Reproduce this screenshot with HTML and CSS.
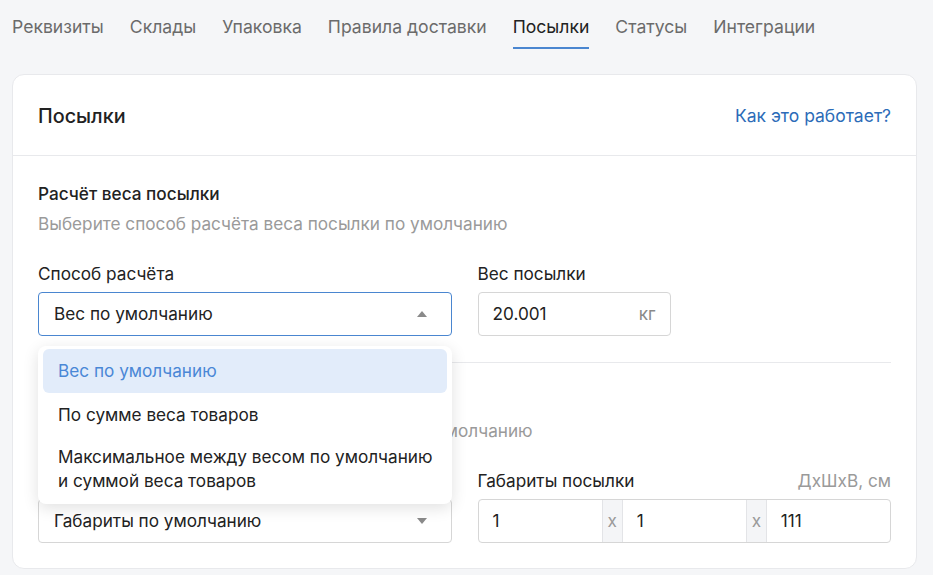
FILE: index.html
```html
<!DOCTYPE html>
<html lang="ru">
<head>
    <meta charset="UTF-8">
    <meta name="viewport" content="width=device-width, initial-scale=1.0">
    <title>Посылки</title>
    <link rel="stylesheet" href="styles.css">
</head>
<body>
    <nav class="tabs">
        <a class="tab">Реквизиты</a>
        <a class="tab">Склады</a>
        <a class="tab">Упаковка</a>
        <a class="tab">Правила доставки</a>
        <a class="tab active">Посылки</a>
        <a class="tab">Статусы</a>
        <a class="tab">Интеграции</a>
    </nav>

    <div class="card">
        <div class="card-header">
            <h2>Посылки</h2>
            <a class="help-link">Как это работает?</a>
        </div>

        <div class="card-body">
            <section class="section">
                <h3 class="section-title">Расчёт веса посылки</h3>
                <p class="section-desc">Выберите способ расчёта веса посылки по умолчанию</p>

                <div class="fields">
                    <div class="field">
                        <div class="field-label">Способ расчёта</div>
                        <div class="select-wrap">
                            <div class="select open">
                                <span>Вес по умолчанию</span>
                                <span class="caret up"></span>
                            </div>
                            <ul class="dropdown">
                                <li class="option selected">Вес по умолчанию</li>
                                <li class="option">По сумме веса товаров</li>
                                <li class="option multiline">Максимальное между весом по умолчанию<br>и суммой веса товаров</li>
                            </ul>
                        </div>
                    </div>
                    <div class="field">
                        <div class="field-label">Вес посылки</div>
                        <div class="input weight">
                            <span>20.001</span>
                            <span class="unit">кг</span>
                        </div>
                    </div>
                </div>
            </section>

            <hr class="divider">

            <section class="section">
                <h3 class="section-title">Расчёт габаритов посылки</h3>
                <p class="section-desc">Выберите способ расчёта объёма посылки по умолчанию</p>

                <div class="fields">
                    <div class="field">
                        <div class="field-label">Способ расчёта</div>
                        <div class="select">
                            <span>Габариты по умолчанию</span>
                            <span class="caret"></span>
                        </div>
                    </div>
                    <div class="field">
                        <div class="field-label">
                            <span>Габариты посылки</span>
                            <span class="hint">ДхШхВ, см</span>
                        </div>
                        <div class="input-group">
                            <span class="cell">1</span>
                            <span class="addon">x</span>
                            <span class="cell">1</span>
                            <span class="addon">x</span>
                            <span class="cell">111</span>
                        </div>
                    </div>
                </div>
            </section>
        </div>
    </div>
</body>
</html>
```

FILE: styles.css
```css
* {
    margin: 0;
    padding: 0;
    box-sizing: border-box;
}

body {
    font-family: Inter, 'Noto Sans', sans-serif;
    font-size: 17.2px;
    line-height: 20px;
    background: #f5f6f8;
    color: #222;
}

.tabs {
    display: flex;
    gap: 26px;
    padding: 0 12px;
}

.tab {
    padding: 17px 0 10px;
    font-size: 17.6px;
    color: #6b6b6b;
    border-bottom: 2px solid transparent;
    cursor: pointer;
}

.tab.active {
    color: #222;
    border-bottom-color: #4a86d0;
}

.card {
    width: 905px;
    margin: 25px 0 0 12px;
    background: #fff;
    border: 1px solid #e8e9ec;
    border-radius: 12px;
}

.card-header {
    display: flex;
    justify-content: space-between;
    align-items: center;
    height: 81px;
    padding: 2px 25px 0;
    border-bottom: 1px solid #e8e9ec;
}

.card-header h2 {
    font-size: 19.8px;
    font-weight: 500;
}

.help-link {
    font-size: 17.5px;
    color: #2c6cb8;
    cursor: pointer;
}

.card-body {
    padding: 28px 25px 25px;
}

.section-title {
    font-size: 17.2px;
    font-weight: 500;
}

.section-desc {
    margin-top: 10px;
    color: #9a9a9a;
}

.fields {
    display: grid;
    grid-template-columns: 1fr 1fr;
    gap: 26px;
    margin-top: 30px;
}

.field-label {
    display: flex;
    justify-content: space-between;
    margin-bottom: 8px;
}

.hint {
    color: #9a9a9a;
}

.select-wrap {
    position: relative;
}

.select {
    display: flex;
    justify-content: space-between;
    align-items: center;
    height: 44px;
    padding: 0 24px 0 15px;
    border: 1px solid #d6d6d6;
    border-radius: 4px;
}

.select.open {
    border-color: #4a86d0;
}

.caret {
    width: 0;
    height: 0;
    border-left: 5px solid transparent;
    border-right: 5px solid transparent;
    border-top: 6px solid #8a8a8a;
}

.caret.up {
    border-top: none;
    border-bottom: 6px solid #8a8a8a;
}

.input {
    display: flex;
    justify-content: space-between;
    align-items: center;
    height: 44px;
    padding: 0 14px;
    border: 1px solid #d6d6d6;
    border-radius: 4px;
}

.input.weight {
    width: 193px;
}

.unit {
    color: #8a8a8a;
}

.input-group {
    display: flex;
    height: 44px;
    border: 1px solid #d6d6d6;
    border-radius: 4px;
}

.cell {
    flex: 1;
    display: flex;
    align-items: center;
    padding-left: 14px;
}

.addon {
    width: 21px;
    display: flex;
    align-items: center;
    justify-content: center;
    background: #f4f5f7;
    border-left: 1px solid #e3e4e7;
    border-right: 1px solid #e3e4e7;
    color: #9a9a9a;
}

.divider {
    border: none;
    border-top: 1px solid #e8e9ec;
    margin: 26px 0 28px;
}

.dropdown {
    position: absolute;
    top: 54px;
    left: 0;
    width: 414px;
    padding: 3px 5px;
    list-style: none;
    background: #fff;
    border-radius: 8px;
    box-shadow: 0 4px 16px rgba(0, 0, 0, 0.12);
    z-index: 10;
}

.option {
    padding: 10px 15px;
    line-height: 24px;
    border-radius: 6px;
    white-space: nowrap;
    cursor: pointer;
}

.option.multiline {
    padding: 8px 15px;
}

.option.selected {
    background: #e2ecfa;
    color: #4a87d6;
}
```
